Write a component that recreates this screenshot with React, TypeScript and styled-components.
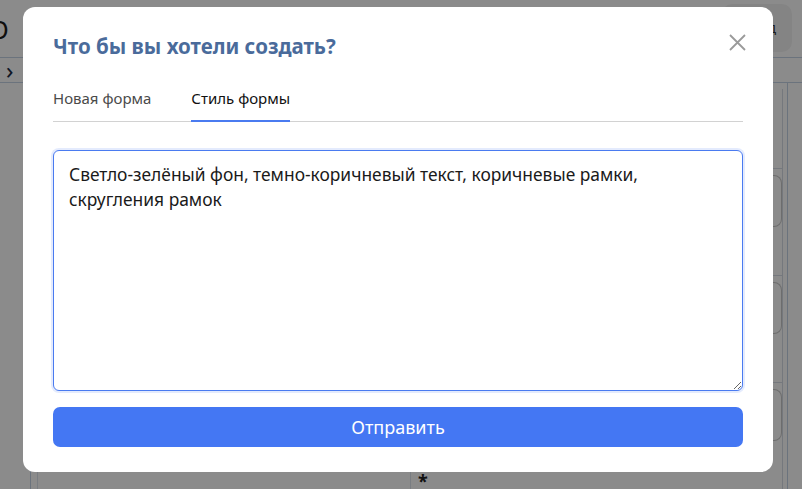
import React, { useEffect, useRef } from 'react'
import styled, { createGlobalStyle } from 'styled-components'

const GlobalStyle = createGlobalStyle`
  html, body {
    margin: 0;
    padding: 0;
    background: #ffffff;
    font-family: "Noto Sans", "Open Sans", sans-serif;
    overflow: hidden;
  }
`

const TEXT = 'Светло-зелёный фон, темно-коричневый текст, коричневые рамки, скругления рамок'

const App = () => {
  const areaRef = useRef<HTMLTextAreaElement>(null)

  useEffect(() => {
    const el = areaRef.current
    if (el) {
      el.focus()
      el.setSelectionRange(TEXT.length, TEXT.length)
    }
  }, [])

  return (
    <>
      <GlobalStyle />
      <Page>
        <TopBar>
          <Logo>О</Logo>
          <TopButton>Код</TopButton>
        </TopBar>
        <SubBar>
          <Chevron>›</Chevron>
        </SubBar>
        <Body>
          <Canvas>
            <Column />
            <Column>
              <Star>*</Star>
            </Column>
          </Canvas>
          <Side>
            <SideInner>
              <SideBlock $first />
              <SideBlock><SideField /></SideBlock>
              <SideBlock><SideField /></SideBlock>
              <SideBlock><SideField /></SideBlock>
            </SideInner>
          </Side>
        </Body>
      </Page>

      <Overlay>
        <Modal>
          <Header>
            <Title>Что бы вы хотели создать?</Title>
            <Close aria-label="Закрыть">
              <svg width="17" height="17" viewBox="0 0 17 17">
                <path d="M1 1L16 16M16 1L1 16" stroke="#9a9a9a" strokeWidth="1.8" fill="none" />
              </svg>
            </Close>
          </Header>
          <Tabs>
            <Tab>Новая форма</Tab>
            <Tab $active>Стиль формы</Tab>
          </Tabs>
          <Area ref={areaRef} defaultValue={TEXT} spellCheck={false} />
          <Submit>Отправить</Submit>
        </Modal>
      </Overlay>
    </>
  )
}

export default App

const Page = styled.div`
  width: 802px;
  height: 489px;
  display: flex;
  flex-direction: column;
  background: #ffffff;
`
const TopBar = styled.div`
  height: 70px;
  border-bottom: 1px solid #c4d3e6;
  display: flex;
  align-items: center;
  justify-content: space-between;
`
const Logo = styled.div`
  margin-left: -11px;
  font-size: 26px;
  color: #1a1a1a;
`
const TopButton = styled.div`
  width: 70px;
  height: 48px;
  margin-right: 10px;
  margin-top: -2px;
  border-radius: 10px;
  background: #f3f3f3;
  display: flex;
  align-items: center;
  justify-content: flex-end;
  padding-right: 16px;
  box-sizing: border-box;
  color: #333;
  font-size: 14px;
`
const SubBar = styled.div`
  height: 29px;
  border-bottom: 1px solid #c4d3e6;
  display: flex;
  align-items: center;
`
const Chevron = styled.span`
  margin-left: 6px;
  font-size: 24px;
  color: #1c2b44;
  line-height: 1;
`
const Body = styled.div`
  flex: 1;
  display: flex;
`
const Canvas = styled.div`
  flex: 1;
  margin-left: 30px;
  border-left: 1px solid #c4d3e6;
  padding-left: 6px;
  display: grid;
  grid-template-columns: 373px 1fr;
`
const Column = styled.div`
  border-left: 1px solid #dfe6ee;
  position: relative;
`
const Star = styled.span`
  position: absolute;
  left: 7px;
  bottom: 1px;
  font-size: 18px;
  line-height: 14px;
  font-weight: 700;
  color: #222;
`
const Side = styled.div`
  width: 14px;
  border-left: 1px solid #c4d3e6;
  margin-left: -1px;
`
const SideInner = styled.div`
  margin: 6px 0 0 -16px;
  width: 10px;
  border-right: 1px solid #d6dde6;
`
const SideBlock = styled.div<{ $first?: boolean }>`
  height: ${p => (p.$first ? '79px' : '107px')};
  border-top: ${p => (p.$first ? 'none' : '1px solid #d6dde6')};
  box-sizing: border-box;
  padding-top: 6px;
`
const SideField = styled.div`
  width: 10px;
  height: 52px;
  border: 1px solid #c8c8c8;
  border-left: none;
  border-radius: 0 8px 8px 0;
  box-sizing: border-box;
`
const Overlay = styled.div`
  position: fixed;
  inset: 0;
  background: rgba(0, 0, 0, 0.455);
  padding: 7px 0 0 23px;
`
const Modal = styled.div`
  width: 750px;
  height: 465px;
  box-sizing: border-box;
  background: #ffffff;
  border-radius: 12px;
  padding: 22px 30px 0 30px;
  display: flex;
  flex-direction: column;
`
const Header = styled.div`
  display: flex;
  align-items: center;
  justify-content: space-between;
  height: 34px;
`
const Title = styled.h2`
  margin: 0;
  font-size: 20.5px;
  font-weight: 700;
  color: #4a6b9b;
`
const Close = styled.button`
  border: none;
  background: none;
  padding: 0;
  margin-right: -3px;
  margin-top: -8px;
  display: flex;
  cursor: pointer;
`
const Tabs = styled.div`
  margin-top: 19px;
  display: flex;
  gap: 40px;
  border-bottom: 1px solid #d2d2d2;
`
const Tab = styled.div<{ $active?: boolean }>`
  font-size: 15px;
  padding: 6px 0 12px;
  color: ${p => (p.$active ? '#111' : '#4a4a4a')};
  border-bottom: 2px solid ${p => (p.$active ? '#4a7bf0' : 'transparent')};
  margin-bottom: -1px;
`
const Area = styled.textarea`
  margin-top: 28px;
  height: 241px;
  box-sizing: border-box;
  resize: vertical;
  font-family: "Noto Sans", "Open Sans", sans-serif;
  font-size: 17.4px;
  line-height: 25px;
  color: #1a1a1a;
  padding: 11px 15px 10px;
  border: 1px solid #4a7bf0;
  border-radius: 6px;
  outline: none;
  box-shadow: 0 0 0 2px rgba(74, 123, 240, 0.15);
  caret-color: #000;
`
const Submit = styled.button`
  margin-top: 16px;
  height: 40px;
  border: none;
  border-radius: 7px;
  background: #4477f3;
  color: #ffffff;
  font-family: "Noto Sans", "Open Sans", sans-serif;
  font-size: 18px;
  cursor: pointer;
`
